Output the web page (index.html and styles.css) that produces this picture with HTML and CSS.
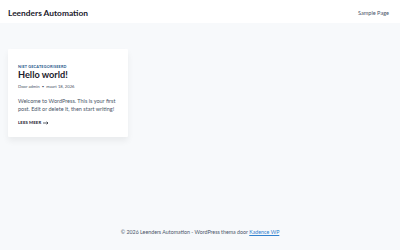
FILE: index.html
```html
<!DOCTYPE html>
<html lang="nl">
<head>
  <meta charset="UTF-8" />
  <meta name="viewport" content="width=device-width, initial-scale=1.0"/>
  <title>Leenders Automation</title>
  <link rel="stylesheet" href="styles.css">
</head>
<body>
  <header class="siteHeader">
    <a class="siteTitle" href="#">Leenders Automation</a>
    <nav class="mainNav">
      <a href="#">Sample Page</a>
    </nav>
  </header>

  <main class="content">
    <article class="post">
      <div class="postCat"><a href="#">Niet gecategoriseerd</a></div>
      <h2 class="postTitle">Hello world!</h2>
      <div class="postMeta">Door <a href="#">admin</a> <span class="dot">&bull;</span> maart 18, 2026</div>
      <p class="postExcerpt">Welcome to WordPress. This is your first post. Edit or delete it, then start writing!</p>
      <a class="readMore" href="#">Lees meer
        <svg class="arrow" width="6" height="4" viewBox="0 0 6 4"><path d="M0 2h5M3.6 0.7L5 2 3.6 3.3" stroke="#1a202c" stroke-width="0.7" fill="none"/></svg>
      </a>
    </article>
  </main>

  <footer class="siteFooter">
    &copy; 2026 Leenders Automation - WordPress thema door <a href="#">Kadence WP</a>
  </footer>
</body>
</html>
```

FILE: styles.css
```css
html, body {
  height: 100%;
}

body {
  margin: 0;
  font-family: Lato, "Noto Sans", sans-serif;
  background-color: #f7f9fb;
  color: #2d3748;
  display: flex;
  flex-direction: column;
}

a {
  color: inherit;
  text-decoration: none;
}

.siteHeader {
  background-color: #fff;
  height: 23px;
  display: flex;
  align-items: center;
  justify-content: space-between;
  padding: 2px 11px 0 8px;
  box-sizing: border-box;
}

.siteTitle {
  font-size: 8.4px;
  font-weight: 700;
  color: #1a202c;
}

.mainNav {
  font-size: 5.6px;
  line-height: 8px;
  color: #4a5568;
}

.content {
  flex: 1;
  padding: 26px 8px;
}

.post {
  background-color: #fff;
  width: 100px;
  padding: 15px 10px 11px;
  box-shadow: 0 4px 6px rgba(0, 0, 0, 0.06);
  border-radius: 1px;
}

.postCat {
  font-size: 3.8px;
  font-weight: 700;
  letter-spacing: 0.2px;
  text-transform: uppercase;
  color: #215387;
  line-height: 6px;
}

.postTitle {
  margin: 0 0 4px;
  font-size: 9.2px;
  line-height: 10px;
  font-weight: 700;
  color: #1a202c;
}

.postMeta {
  font-size: 4.2px;
  color: #4a5568;
  line-height: 6px;
}

.postMeta .dot {
  margin: 0 1px;
}

.postExcerpt {
  margin: 7px -2px 7px 0;
  font-size: 5.5px;
  line-height: 8px;
  color: #4a5568;
}

.readMore {
  display: flex;
  align-items: center;
  gap: 2px;
  font-size: 4.3px;
  line-height: 6px;
  font-weight: 700;
  text-transform: uppercase;
  color: #1a202c;
  letter-spacing: 0.1px;
}

.siteFooter {
  text-align: center;
  font-size: 5.3px;
  color: #4a5568;
  padding: 0 0 15px;
}

.siteFooter a {
  color: #3182ce;
  text-decoration: underline;
}
```
